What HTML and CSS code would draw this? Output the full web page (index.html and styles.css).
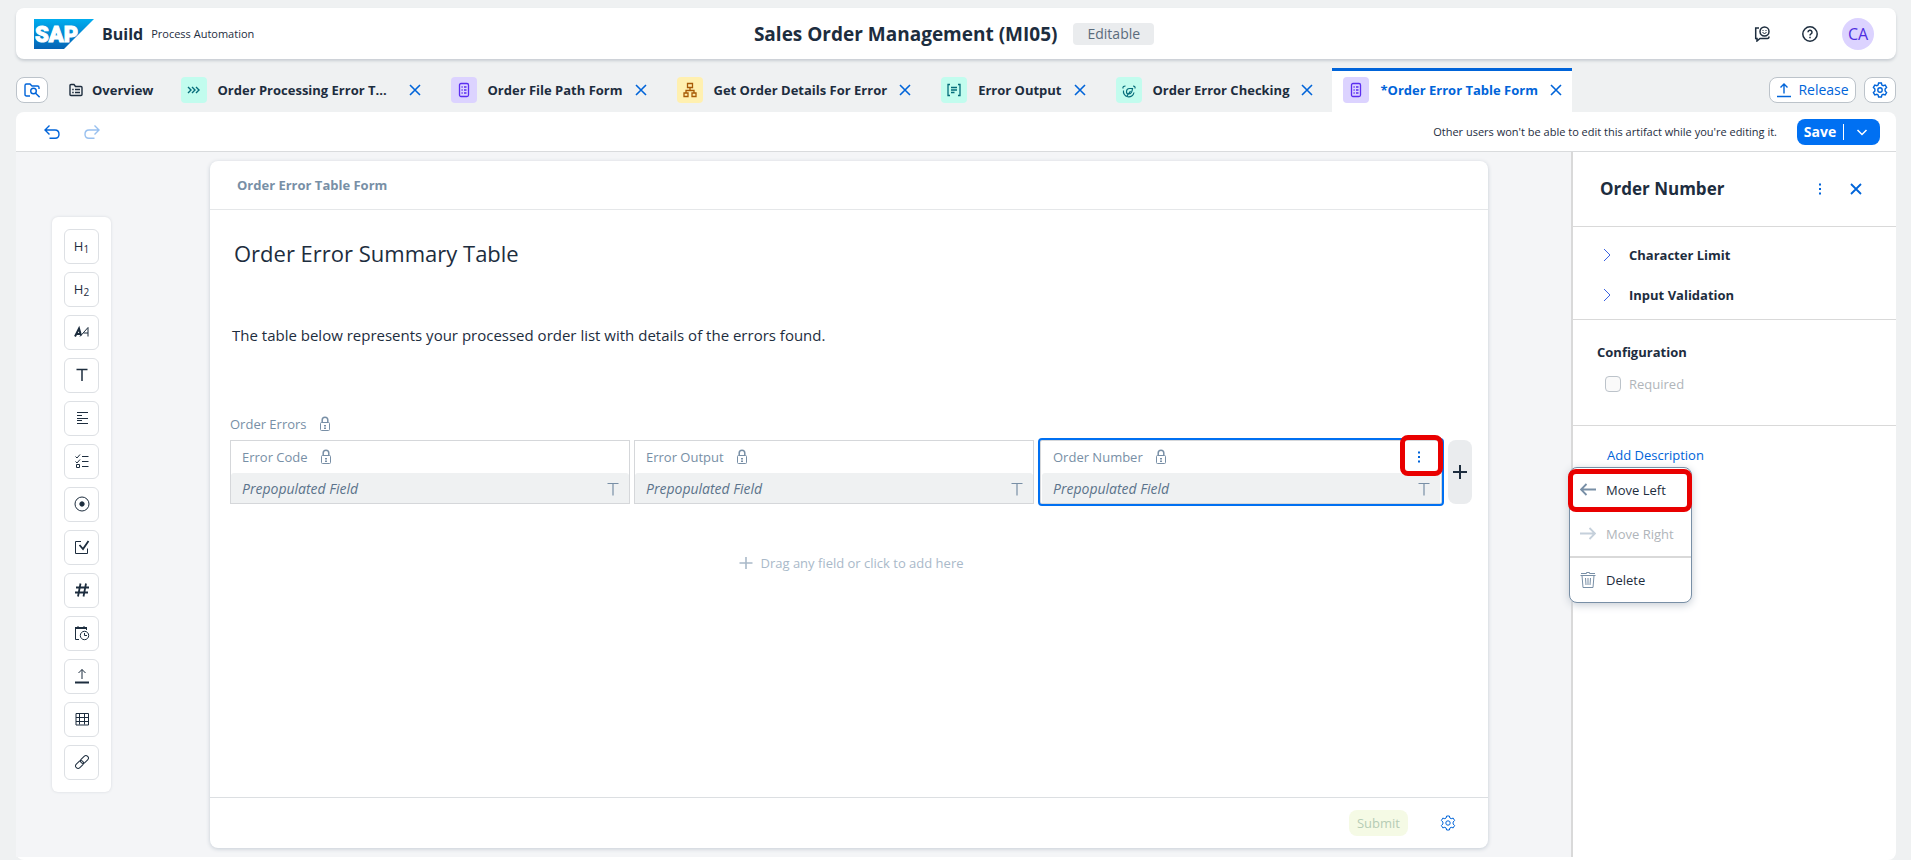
FILE: index.html
```html
<!DOCTYPE html>
<html lang="en">
<head>
<meta charset="utf-8">
<title>Sales Order Management (MI05)</title>
<link rel="stylesheet" href="styles.css">
</head>
<body>
<svg class="sprite" aria-hidden="true">
  <symbol id="close" viewBox="0 0 12 12"><path d="M1 1l10 10M11 1L1 11"/></symbol>
  <symbol id="dots" viewBox="0 0 16 16"><path d="M8 2.500v2M8 7v2M8 11.500v2" stroke-width="2"/></symbol>
  <symbol id="form" viewBox="0 0 16 16"><rect x="3.500" y="1.500" width="9" height="13" rx="1.500" stroke-width="1.300"/><path d="M5.500 5h1.200M8 5h2.500M5.500 8h1.200M8 8h2.500M5.500 11h1.200M8 11h2.500" stroke-width="1.300"/></symbol>
  <symbol id="lock" viewBox="0 0 12 16"><rect x="1.500" y="6.500" width="9" height="8" rx="1"/><path d="M3.200 6.500V4a2.800 2.800 0 0 1 5.600 0v2.500" stroke-width="1.500"/><path d="M5 9.500h2M6 9.500v3M5 12.500h2"/></symbol>
  <symbol id="text" viewBox="0 0 16 16"><path d="M2.500 2.500h11M8 2.500v12" stroke-width="1.200"/></symbol>
  <symbol id="gear" viewBox="0 0 16 16"><path d="M6.600 1h2.800l.5 2 1.300.7 2-.6 1.400 2.400L13.100 7v2l1.500 1.500-1.400 2.400-2-.6-1.300.7-.5 2H6.600l-.5-2-1.300-.7-2 .6-1.400-2.400L2.900 9V7L1.400 5.500l1.400-2.400 2 .6L6.100 3z"/><circle cx="8" cy="8" r="2.200"/></symbol>
  <symbol id="upload" viewBox="0 0 16 16"><path d="M8 11.500V2M4.500 5.500L8 2l3.500 3.500M1 14.500h14" stroke-width="1.400"/></symbol>
</svg>

<header class="shell">
  <div class="brand">
    <svg class="logo" viewBox="0 0 60 30" role="img" aria-label="SAP">
      <defs><linearGradient id="sap" x2="0" y2="1"><stop offset="0" stop-color="#00adef"/><stop offset="1" stop-color="#0563b5"/></linearGradient></defs>
      <path d="M0 0h60L30 30H0z" fill="url(#sap)"/>
      <text x="1" y="23" class="logo-text">SAP</text>
    </svg>
    <strong class="product">Build</strong>
    <span class="suite">Process Automation</span>
  </div>
  <div class="project">
    <h1>Sales Order Management (MI05)</h1>
    <span class="tag">Editable</span>
  </div>
  <div class="shell-actions">
    <button class="ghost" aria-label="Feedback"><svg class="icon" viewBox="0 0 16 16"><path d="M5 2H1.700v10.500H3V15l3-2.500h7.500q1.500 0 1.500-2" stroke-width="1.500"/><circle cx="10.500" cy="5.500" r="4.500" stroke-width="1.500"/><path d="M8.500 6.500q2 2 4 0M9 4v1M12 4v1"/></svg></button>
    <button class="ghost" aria-label="Help"><svg class="icon" viewBox="0 0 16 16"><circle cx="8" cy="8" r="7.200" stroke-width="1.500"/><path d="M6 6.200a2 2 0 1 1 3 1.700q-1 .5-1 1.600M8 10.800v1.400" stroke-width="1.500"/></svg></button>
    <button class="avatar">CA</button>
  </div>
</header>

<nav class="tabs">
  <button class="square" aria-label="Browse project"><svg class="icon" viewBox="0 0 16 16"><path d="M6 14H2.500Q1 14 1 12.500V3.500Q1 2 2.500 2H6l2 2h5.500Q15 4 15 5.500V7" stroke-width="1.400"/><circle cx="9.500" cy="9" r="2.800" stroke-width="1.400"/><path d="M11.600 11.200l4 4" stroke-width="1.400"/></svg></button>
  <a class="overview" href="#"><svg class="icon" viewBox="0 0 16 16"><path d="M2 12.500V3.500Q2 2.500 3 2.500h3l1.500 2H13q1 0 1 1v7q0 1-1 1H3q-1 0-1-1z" stroke-width="1.400"/><path d="M4.200 7.500h1.500M7 7.500h5M4.200 10.500h1.500M7 10.500h5" stroke-width="1.300"/></svg>Overview</a>
  <div class="tab">
    <span class="tile teal"><svg class="icon" viewBox="0 0 16 16"><path d="M2 5l3 3-3 3M6 5l3 3-3 3M10 5l3 3-3 3" stroke-width="1.400"/></svg></span>
    <a href="#" class="long">Order Processing Error T...</a>
    <button class="x" aria-label="Close"><svg><use href="#close"/></svg></button>
  </div>
  <div class="tab">
    <span class="tile violet"><svg class="icon"><use href="#form"/></svg></span>
    <a href="#">Order File Path Form</a>
    <button class="x" aria-label="Close"><svg><use href="#close"/></svg></button>
  </div>
  <div class="tab">
    <span class="tile yellow"><svg class="icon" viewBox="0 0 16 16"><path d="M5.500 1.500h5v4h-5zM2 11h4v3.500H2zM10 11h4v3.500h-4zM8 5.500v3M4 11V8.500h8V11" stroke-width="1.300"/></svg></span>
    <a href="#">Get Order Details For Error</a>
    <button class="x" aria-label="Close"><svg><use href="#close"/></svg></button>
  </div>
  <div class="tab">
    <span class="tile teal"><svg class="icon" viewBox="0 0 16 16"><path d="M4 2.500H2v11h2M12 2.500h2v11h-2M5 5.500h6M5 8h6M5 10.500h3.500" stroke-width="1.300"/></svg></span>
    <a href="#">Error Output</a>
    <button class="x" aria-label="Close"><svg><use href="#close"/></svg></button>
  </div>
  <div class="tab">
    <span class="tile teal"><svg class="icon" viewBox="0 0 16 16"><path d="M2 6.500q-.5-2.500 2.500-2.500M14 6.500q.5-2.500-2-2.500M2.500 8.500a5.200 5.200 0 0 0 10.500 2M5.500 10q0-3.500 3-3.500h3q-.5 5.500-4 5.500-2 0-2-2zM6 14l3.500-5" stroke-width="1.200"/></svg></span>
    <a href="#">Order Error Checking</a>
    <button class="x" aria-label="Close"><svg><use href="#close"/></svg></button>
  </div>
  <div class="tab active">
    <span class="tile violet"><svg class="icon"><use href="#form"/></svg></span>
    <a href="#">*Order Error Table Form</a>
    <button class="x" aria-label="Close"><svg><use href="#close"/></svg></button>
  </div>
  <div class="tab-actions">
    <button class="release"><svg class="icon"><use href="#upload"/></svg>Release</button>
    <button class="square settings" aria-label="Settings"><svg class="icon"><use href="#gear"/></svg></button>
  </div>
</nav>

<main class="work">
  <div class="toolbar">
    <button class="ghost blue" aria-label="Undo"><svg class="icon" viewBox="0 0 16 16"><path d="M5.500 1.500L1 6l4.500 4.500M1 6h10q4 0 4 4.200T11 14.300H5.500" stroke-width="1.400"/></svg></button>
    <button class="ghost blue faded" aria-label="Redo" disabled><svg class="icon" viewBox="0 0 16 16"><path d="M10.500 1.500L15 6l-4.500 4.500M15 6H5Q1 6 1 10.200t4 4.100h5.500" stroke-width="1.400"/></svg></button>
    <p class="notice">Other users won't be able to edit this artifact while you're editing it.</p>
    <div class="save"><button>Save</button><button class="more" aria-label="Save options"><svg viewBox="0 0 12 12"><path d="M1.500 4L6 8.500 10.500 4" stroke-width="1.500"/></svg></button></div>
  </div>

  <div class="body">
    <section class="canvas">
      <div class="palette">
        <button aria-label="Heading 1">H<sub>1</sub></button>
        <button aria-label="Heading 2">H<sub>2</sub></button>
        <button aria-label="Paragraph"><svg class="icon" viewBox="0 0 16 16"><path d="M1 12.500L5 4.500l2 7M2.500 10h4" stroke-width="2"/><path d="M6 12.500l8-9v9M9.500 9H14"/></svg></button>
        <button aria-label="Text"><svg class="icon" viewBox="0 0 16 16"><path d="M2.500 2.500h11M8 2.500V14" stroke-width="1.500"/></svg></button>
        <button aria-label="Text area"><svg class="icon" viewBox="0 0 16 16"><path d="M3 2.500h11M3 5.500h5M3 8.500h11M3 10.500h5M3 13.500h11"/></svg></button>
        <button aria-label="Choice"><svg class="icon" viewBox="0 0 16 16"><path d="M1.500 3.500L3 5l3-3.500M8 3.500h6.500M1.500 8.500L3 10l3-3.500M8 8.500h6.500M2.500 11.500h3v3h-3zM8 13.500h6.500"/></svg></button>
        <button aria-label="Radio"><svg class="icon" viewBox="0 0 16 16"><circle cx="8" cy="8" r="7"/><circle cx="8" cy="8" r="2.200" class="solid"/></svg></button>
        <button aria-label="Checkbox"><svg class="icon" viewBox="0 0 16 16"><path d="M7 2.500H1.500v12h12V9.500"/><path d="M5.500 6L9 10l5.500-8" stroke-width="1.800"/></svg></button>
        <button aria-label="Number"><svg class="icon" viewBox="0 0 16 16"><path d="M6.500 1.500l-2.500 13M12 1.500l-2.500 13M2 5.500h13M1 10.500h13" stroke-width="1.800"/></svg></button>
        <button aria-label="Date and time"><svg class="icon" viewBox="0 0 16 16"><path d="M5 14.500H1.500V2.500h11V5"/><path d="M1 3h12" stroke-width="2"/><path d="M4 1v2M10 1v2"/><circle cx="10.500" cy="10.500" r="4.200"/><path d="M10.500 8v2.500H13"/></svg></button>
        <button aria-label="File upload"><svg class="icon" viewBox="0 0 16 16"><path d="M8 11V1.500M4.500 5L8 1.500 11.500 5"/><path d="M1 14.500h14" stroke-width="2"/></svg></button>
        <button aria-label="Table"><svg class="icon" viewBox="0 0 16 16"><path d="M2 2.500h12.500v11.500H2zM5.500 2.500v11M10.500 2.500v11M2 6.500h12M2 10.500h12"/></svg></button>
        <button aria-label="Link"><svg class="icon" viewBox="0 0 16 16"><g transform="rotate(-45 8 8)"><rect x="0" y="5.500" width="9" height="5" rx="2.500"/><rect x="7" y="5.500" width="9" height="5" rx="2.500"/></g></svg></button>
      </div>

      <article class="card">
        <header class="card-head">Order Error Table Form</header>
        <div class="card-body">
          <h2>Order Error Summary Table</h2>
          <p class="intro">The table below represents your processed order list with details of the errors found.</p>
          <div class="label">Order Errors<svg class="lock"><use href="#lock"/></svg></div>
          <div class="fields">
            <div class="field">
              <div class="field-head">Error Code<svg class="lock"><use href="#lock"/></svg></div>
              <div class="field-value">Prepopulated Field<svg class="icon"><use href="#text"/></svg></div>
            </div>
            <div class="field">
              <div class="field-head">Error Output<svg class="lock"><use href="#lock"/></svg></div>
              <div class="field-value">Prepopulated Field<svg class="icon"><use href="#text"/></svg></div>
            </div>
            <div class="field selected">
              <div class="field-head">Order Number<svg class="lock"><use href="#lock"/></svg>
                <button class="ghost blue menu-button" aria-label="Column menu"><svg class="icon"><use href="#dots"/></svg></button></div>
              <div class="field-value">Prepopulated Field<svg class="icon"><use href="#text"/></svg></div>
              <span class="mark mark-dots"></span>
            </div>
            <button class="add" aria-label="Add column"><svg class="icon" viewBox="0 0 16 16"><path d="M8 1v14M1 8h14" stroke-width="2"/></svg></button>
          </div>
          <button class="drop"><svg class="icon" viewBox="0 0 16 16"><path d="M8 2v12M1.500 8h13" stroke-width="1.600"/></svg>Drag any field or click to add here</button>
        </div>
        <footer class="card-foot">
          <button class="submit" disabled>Submit</button>
          <button class="ghost blue" aria-label="Form settings"><svg class="icon"><use href="#gear"/></svg></button>
        </footer>
      </article>
    </section>

    <aside class="panel">
      <div class="panel-head">
        <h2>Order Number</h2>
        <button class="ghost blue" aria-label="More"><svg class="icon"><use href="#dots"/></svg></button>
        <button class="x large" aria-label="Close panel"><svg><use href="#close"/></svg></button>
      </div>
      <div class="rules">
        <button><svg viewBox="0 0 12 12"><path d="M3 0l6 6-6 6"/></svg>Character Limit</button>
        <button><svg viewBox="0 0 12 12"><path d="M3 0l6 6-6 6"/></svg>Input Validation</button>
      </div>
      <div class="config">
        <h3>Configuration</h3>
        <label><input type="checkbox" disabled>Required</label>
      </div>
      <div class="describe">
        <a href="#">Add Description</a>
        <div class="menu">
          <button><svg class="icon" viewBox="0 0 16 16"><path d="M6.500 2L1 7.500 6.500 13M1 7.500h15" stroke-width="1.800"/></svg>Move Left<span class="mark"></span></button>
          <button disabled><svg class="icon" viewBox="0 0 16 16"><path d="M9.500 2L15 7.500 9.500 13M0 7.500h15" stroke-width="1.800"/></svg>Move Right</button>
          <hr>
          <button><svg class="icon" viewBox="0 0 16 16"><path d="M.5 3.500h15M1 1.500h5.500V.5h3v1H15M2 3.500l1 12h10l1-12M5.500 6l.5 7M8 6v7M10.500 6l-.5 7"/></svg>Delete</button>
        </div>
      </div>
    </aside>
  </div>
</main>
</body>
</html>
```
FILE: styles.css
```css
* { box-sizing: border-box; }
body {
  margin: 0;
  min-height: 100vh;
  display: flex;
  flex-direction: column;
  padding: 8px 15px 0 16px;
  background: #eff1f2;
  color: #1d2d3e;
  font: 13px/20px "Open Sans", "Noto Sans", sans-serif;
}
h1, h2, h3, p { margin: 0; }
button { font: inherit; color: inherit; background: none; border: 0; padding: 0; cursor: pointer; }
a { color: inherit; text-decoration: none; }
svg { fill: none; stroke: currentColor; stroke-width: 1; }
.sprite { display: none; }
.icon { width: 16px; height: 16px; flex: none; }
.solid { fill: currentColor; }
.ghost { display: flex; }
.blue { color: #0064d9; }
.faded { opacity: .4; }

.shell {
  display: grid;
  grid-template-columns: 1fr auto 1fr;
  align-items: center;
  height: 51px;
  padding: 0 22px 0 18px;
  background: #fff;
  border-radius: 8px;
  box-shadow: 0 2px 3px #c9ced3;
}
.brand, .project, .shell-actions { display: flex; align-items: center; }
.logo { width: 60px; height: 30px; stroke: none; }
.logo-text { font: 900 22px "Roboto", sans-serif; fill: #fff; stroke: #fff; }
.product { font-size: 16px; margin: 0 8px; }
.suite { font-size: 11px; }
.project { gap: 16px; }
h1 { font-size: 19px; font-weight: 700; line-height: 24px; }
.tag { padding: 1px 14px; background: #eaecee; border-radius: 4px; color: #5b6b7c; font-size: 14px; }
.shell-actions { justify-content: flex-end; gap: 32px; }
.avatar { width: 32px; height: 32px; margin-left: -8px; border-radius: 50%; background: #dcd3ff; color: #4f2de0; font-size: 16px; }

.tabs { display: flex; align-items: stretch; margin-top: 9px; height: 44px; font-weight: 700; }
.square, .release {
  display: flex; align-items: center; justify-content: center;
  align-self: center; height: 26px; width: 32px;
  background: #fff; border: 1px solid #bcc3ca; border-radius: 8px; color: #0064d9;
}
.settings svg { stroke-width: 1.400; }
.release { width: 87px; gap: 6px; font-weight: 400; font-size: 14px; }
.overview { display: flex; align-items: center; gap: 8px; margin: 0 16px 0 20px; }
.tab { display: flex; align-items: center; padding: 0 10px 0 11px; margin-right: 9px; border-top: 3px solid transparent; border-bottom: 3px solid transparent; white-space: nowrap; }
.tab a { margin: 0 12px 0 11px; }
.tab .long { min-width: 179px; }
.tab.active { background: #fff; border-top-color: #0064d9; border-bottom-color: #fff; color: #0064d9; }
.tile { display: flex; align-items: center; justify-content: center; width: 26px; height: 26px; border-radius: 4px; }
.teal { background: #c2fcee; color: #046c7a; }
.violet { background: #dcd3ff; color: #5b2df0; }
.yellow { background: #fff0b0; color: #a75a05; }
.x { display: flex; color: #0064d9; }
.x svg { width: 12px; height: 12px; stroke-width: 1.600; }
.x.large svg { stroke-width: 1.800; }
.tab-actions { display: flex; gap: 8px; margin-left: auto; }

.work { flex: 1; display: flex; flex-direction: column; background: #fff; border-radius: 8px; padding-bottom: 3px; }
.toolbar { display: flex; align-items: center; gap: 24px; height: 40px; padding: 0 16px 0 28px; border-bottom: 1px solid #d9dbdd; }
.notice { margin-left: auto; font-size: 11px; }
.save { display: flex; height: 26px; margin-left: -4px; border-radius: 8px; background: #0070f2; color: #fff; font-weight: 700; font-size: 14px; }
.save button { width: 46px; }
.save .more { width: 37px; display: flex; align-items: center; justify-content: center; position: relative; }
.save .more::before { content: ""; position: absolute; left: 0; top: 5px; height: 16px; border-left: 1px solid #fff; }
.save svg { width: 12px; height: 12px; }

.body { flex: 1; display: flex; }
.canvas { flex: 1; display: flex; align-items: flex-start; padding: 9px 83px 9px 36px; background: #f4f5f7; }
.palette { display: flex; flex-direction: column; gap: 8px; margin: 56px 99px 0 0; padding: 12px; background: #fff; border-radius: 6px; box-shadow: 0 0 3px #d5d9de; }
.palette button { display: flex; align-items: center; justify-content: center; width: 35px; height: 35px; padding-bottom: 1px; border: 1px solid #dde0e4; border-radius: 6px; }
.palette sub { font-size: 10px; line-height: 12px; align-self: center; padding-top: 5px; }
.card { flex: 1; align-self: stretch; display: flex; flex-direction: column; background: #fff; border-radius: 8px; box-shadow: 0 1px 4px #c5ccd4; }
.card-head { padding: 14px 27px; border-bottom: 1px solid #e5e7e9; color: #788fa6; font-weight: 700; }
.card-body { flex: 1; padding: 27px 16px 0 20px; }
.card-body h2 { padding-left: 4px; font-size: 22px; line-height: 32px; font-weight: 400; }
.intro { margin: 56px 0 67px; padding-left: 2px; font-size: 15px; line-height: 20px; }
.label { display: flex; align-items: center; gap: 12px; height: 24px; color: #788fa6; }
.lock { width: 12px; height: 16px; }
.fields { display: flex; align-items: center; gap: 4px; margin-top: 2px; }
.field { flex: 1; box-sizing: content-box; position: relative; border: 1px solid #d5d7da; }
.field.selected { border: 2px solid #0070f2; border-radius: 4px; padding: 1px 2px; box-shadow: inset 0 0 0 1px #d5d7da; }
.field-head { display: flex; align-items: center; gap: 12px; height: 32px; padding: 0 11px; color: #788fa6; }
.field-value { display: flex; align-items: center; justify-content: space-between; height: 30px; padding: 2px 8px 0 11px; background: #eff1f2; border-radius: 3px 3px 0 0; color: #5b738b; font-style: italic; font-size: 14px; }
.field-value svg { color: #788fa6; }
.menu-button { margin: 0 2px 0 auto; }
.mark { position: absolute; inset: 1px -1px 0 -2px; border: 5px solid #e90000; border-radius: 8px; }
.mark-dots { inset: -5px -1px auto auto; width: 43px; height: 41px; }
.add { display: flex; align-items: center; justify-content: center; width: 24px; height: 64px; background: #eaecee; border-radius: 8px; }
.drop { display: flex; align-items: center; gap: 6px; margin: 47px auto 0; color: #a9b9c9; }
.card-foot { display: flex; align-items: center; justify-content: flex-end; gap: 32px; height: 51px; padding: 0 32px; border-top: 1px solid #dcdfe2; }
.submit { width: 59px; height: 26px; border-radius: 8px; background: #f5fae5; color: #b5ccb5; }

.panel { width: 325px; border-left: 2px solid #d9d9d9; }
.panel-head { display: flex; align-items: center; height: 75px; padding: 0 34px 0 27px; border-bottom: 1px solid #d9d9d9; }
.panel-head h2 { font-size: 17px; line-height: 24px; font-weight: 700; margin-right: auto; }
.panel-head .ghost { margin-right: 22px; }
.rules { display: flex; flex-direction: column; gap: 20px; padding: 18px 28px 14px; border-bottom: 1px solid #d9d9d9; font-weight: 700; }
.rules button { display: flex; align-items: center; gap: 16px; }
.rules svg { width: 12px; height: 12px; color: #3a62e0; }
.config { padding: 22px 24px 31px; border-bottom: 1px solid #d9d9d9; }
h3 { font-size: 13px; font-weight: 700; }
.config label { display: flex; align-items: center; gap: 8px; margin: 12px 0 0 8px; color: #b0b5ba; }
.config input { appearance: none; width: 16px; height: 16px; margin: 0; background: #fafafa; border: 1px solid #bcc3ca; border-radius: 4px; }
.describe { position: relative; padding: 19px 34px; color: #0064d9; }
.menu { position: absolute; left: -4px; top: 41px; width: 123px; background: #fff; border: 1px solid #788fa6; border-radius: 8px; box-shadow: 0 2px 8px #c5ccd4; color: #1d2d3e; }
.menu button { position: relative; display: flex; align-items: center; gap: 10px; width: 100%; height: 44px; padding: 0 10px; }
.menu svg { color: #788fa6; }
.menu button:disabled { color: #b0b5ba; }
.menu button:disabled svg { color: #c5d0db; }
.menu hr { margin: 0; border: 0; height: 2px; background: #d9d9d9; }
```
